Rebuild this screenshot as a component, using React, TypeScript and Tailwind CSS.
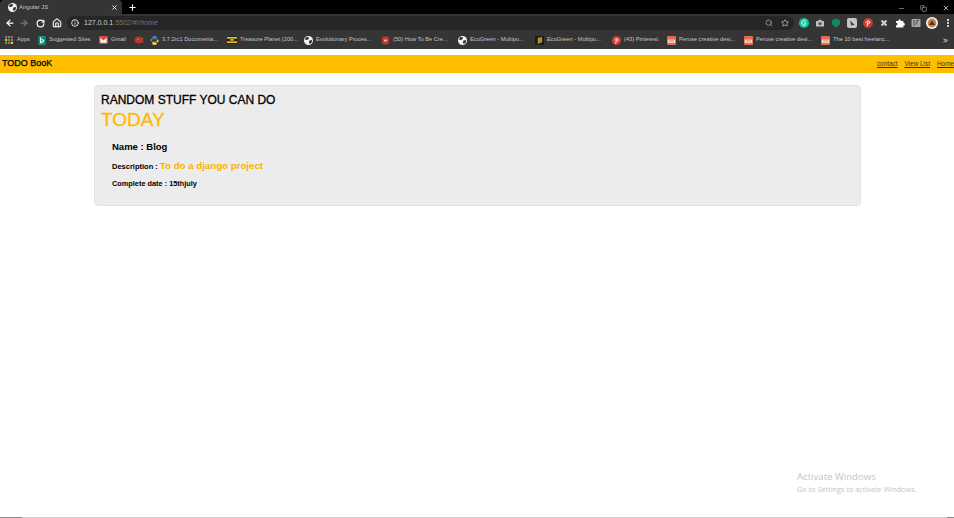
import { ArrowLeft, ArrowRight, RotateCw, Home, Info, Search, Star, MoreVertical, ChevronsRight, Plus, X, Minus, Copy } from "lucide-react";
import type { ReactNode } from "react";

function GlobeFav() {
  return (
    <svg width="9" height="9" viewBox="0 0 10 10">
      <circle cx="5" cy="5" r="5" fill="#f2f2f2" />
      <path d="M2 1.5 L5 1 L5.5 3 L3.5 4.5 L1 4 Z" fill="#333" />
      <path d="M6 5 L9 4.5 L8.5 7.5 L6.5 9 L5.5 7 Z" fill="#333" />
    </svg>
  );
}

function Peruse() {
  return (
    <svg width="9" height="9" viewBox="0 0 10 10">
      <rect width="10" height="10" rx="1" fill="#e8694a" />
      <rect x="1" y="4" width="8" height="3.5" fill="#f7e9e2" />
      <rect x="2" y="5" width="6" height="1" fill="#c96f5a" />
    </svg>
  );
}

const bookmarks: { label: string; w: string; icon: ReactNode }[] = [
  {
    label: "Suggested Sites",
    w: "w-[61px]",
    icon: (
      <svg width="8" height="9" viewBox="0 0 8 10">
        <rect width="8" height="10" fill="#0f8f7e" />
        <path d="M2.5 1.5 V7.5 L5.5 6 V4.5 L3.8 4" stroke="#fff" strokeWidth="1.2" fill="none" />
      </svg>
    ),
  },
  {
    label: "Gmail",
    w: "w-[35px]",
    icon: (
      <svg width="9" height="8" viewBox="0 0 10 9">
        <rect width="10" height="9" rx="1" fill="#e04a3c" />
        <path d="M1.5 2 L5 5 L8.5 2 V7.5 H1.5 Z" fill="#f5f5f5" />
      </svg>
    ),
  },
  {
    label: "",
    w: "w-[16px]",
    icon: (
      <svg width="10" height="8" viewBox="0 0 10 8">
        <ellipse cx="5" cy="4" rx="4" ry="3.6" fill="#b8382c" />
        <path d="M0 2 L2 3 M0 6 L2 5 M10 2 L8 3 M10 6 L8 5" stroke="#b8382c" />
        <circle cx="4" cy="3.5" r="0.6" fill="#f0b0a0" />
      </svg>
    ),
  },
  {
    label: "3.7.2rc1 Documenta...",
    w: "w-[77px]",
    icon: (
      <svg width="9" height="9" viewBox="0 0 10 10">
        <path d="M5 0 C2.5 0 2.5 1 2.5 2.5 H5.2 V3 H1.5 C0 3 0 5.5 1.5 6 H2.5 V4.5 C2.5 4 3 3.6 3.5 3.6 H6 C7 3.6 7.4 3 7.4 2.4 V1 C7.4 0.3 6 0 5 0 Z" fill="#4b8bbe" />
        <path d="M5 10 C7.5 10 7.5 9 7.5 7.5 H4.8 V7 H8.5 C10 7 10 4.5 8.5 4 H7.8 V5.5 C7.8 6 7 6.4 6.5 6.4 H4 C3 6.4 2.6 7 2.6 7.6 V9 C2.6 9.7 4 10 5 10 Z" fill="#ffd43b" />
      </svg>
    ),
  },
  {
    label: "Treasure Planet (200...",
    w: "w-[77px]",
    icon: (
      <svg width="10" height="8" viewBox="0 0 10 8">
        <rect width="10" height="8" fill="#222" />
        <rect y="1" width="10" height="1.6" fill="#f0c419" />
        <rect y="5.4" width="10" height="1.6" fill="#f0c419" />
        <rect x="3" y="3.2" width="4" height="1.4" fill="#f0c419" />
      </svg>
    ),
  },
  { label: "Evolutionary Proces...", w: "w-[77px]", icon: <GlobeFav /> },
  {
    label: "(50) How To Be Cre...",
    w: "w-[77px]",
    icon: (
      <svg width="9" height="9" viewBox="0 0 10 10">
        <path d="M1 2 L3 0.5 H7 L9 2 V8 L7 9.5 H3 L1 8 Z" fill="#c0392b" />
        <rect x="3.5" y="4" width="3" height="2" fill="#f3d0c8" />
      </svg>
    ),
  },
  { label: "EcoGreen - Multipu...", w: "w-[77px]", icon: <GlobeFav /> },
  {
    label: "EcoGreen - Multipu...",
    w: "w-[77px]",
    icon: (
      <svg width="9" height="9" viewBox="0 0 10 10">
        <rect width="10" height="10" fill="#1a1a1a" />
        <path d="M3 2 L8 1 V7 L3 9 Z" fill="#b98a2c" />
      </svg>
    ),
  },
  {
    label: "(43) Pinterest",
    w: "w-[55px]",
    icon: (
      <svg width="9" height="9" viewBox="0 0 10 10">
        <circle cx="5" cy="5" r="5" fill="#d23b33" />
        <path d="M4 8.5 L5 3.5 M3.2 5 C2.6 2.5 7.4 2 7 4.5 C6.8 6 5 6.2 4.6 5.4" stroke="#fff" strokeWidth="0.9" fill="none" />
      </svg>
    ),
  },
  { label: "Peruse creative desi...", w: "w-[77px]", icon: <Peruse /> },
  { label: "Peruse creative desi...", w: "w-[77px]", icon: <Peruse /> },
  { label: "The 10 best freelanc...", w: "w-[77px]", icon: <Peruse /> },
];

function Extensions() {
  return (
    <div className="flex items-center gap-[6px]">
      <svg width="10" height="10" viewBox="0 0 10 10">
        <circle cx="5" cy="5" r="5" fill="#15c39a" />
        <path d="M7 3.4 A2.4 2.4 0 1 0 7 6.6 M5.2 5.2 H7.2" stroke="#fff" strokeWidth="1" fill="none" />
      </svg>
      <svg width="10" height="10" viewBox="0 0 10 10">
        <path d="M1 3 H3 L3.8 1.8 H6.2 L7 3 H9 V8.4 H1 Z" fill="#bdbdbd" />
        <circle cx="5" cy="5.6" r="1.6" fill="#555" />
      </svg>
      <svg width="10" height="10" viewBox="0 0 10 10">
        <path d="M5 0.5 L9 2.5 V6 L5 9.8 L1 6 V2.5 Z" fill="#0f8a5f" />
      </svg>
      <svg width="10" height="10" viewBox="0 0 10 10">
        <rect width="10" height="10" rx="2" fill="#c4c4c4" />
        <path d="M3 2.5 L7.5 7 L5.5 7 L4.6 8 Z" fill="#333" />
      </svg>
      <svg width="10" height="10" viewBox="0 0 10 10">
        <circle cx="5" cy="5" r="5" fill="#c9382c" />
        <path d="M4 8.5 L5 3.5 M3.2 5 C2.6 2.5 7.4 2 7 4.5 C6.8 6 5 6.2 4.6 5.4" stroke="#fff" strokeWidth="0.9" fill="none" />
      </svg>
      <svg width="10" height="10" viewBox="0 0 10 10">
        <path d="M2.5 2.5 L7.5 7.5 M7.5 2.5 L2.5 7.5" stroke="#d0d0d0" strokeWidth="2" />
      </svg>
      <svg width="10" height="10" viewBox="0 0 10 10">
        <path d="M1 3 H3.4 C3.2 1 6 1 5.8 3 H8.4 V5 C10.4 5 10.4 7.6 8.4 7.6 V9.6 H1 V7.4 C3 7.4 3 4.8 1 4.8 Z" fill="#fff" />
      </svg>
      <svg width="10" height="10" viewBox="0 0 10 10">
        <rect x="0.5" y="1" width="9" height="8" rx="1" fill="#a8a8a8" />
        <path d="M6 2.5 V6.5 M6 2.5 H8 M2 3 H4.5 M2 5 H4.5 M2 7 H4.5" stroke="#353535" strokeWidth="0.8" />
      </svg>
      <svg width="12" height="12" viewBox="0 0 12 12" className="-mx-px">
        <circle cx="6" cy="6" r="6" fill="#f4f4f4" />
        <circle cx="6" cy="6" r="4.4" fill="#d97a3c" />
        <path d="M3 8 L6 3.5 L9 8 Z" fill="#3a3a3a" />
      </svg>
      <MoreVertical size={10} className="text-white" strokeWidth={3} />
    </div>
  );
}

function BrowserChrome() {
  return (
    <div className="bg-[#353535] text-[#c4c4c4]">
      <div className="flex h-[14px] items-end bg-black">
        <div className="flex h-[14px] w-[122px] items-center rounded-t-[4px] bg-[#353535] pl-[8px] pr-[4px]">
          <GlobeFav />
          <span className="ml-[2px] flex-1 text-[6px] text-[#c4c4c4]">Angular JS</span>
          <X size={7} className="text-white" strokeWidth={3} />
        </div>
        <Plus size={9} className="ml-[6px] mb-[2px] text-white" strokeWidth={3} />
        <div className="ml-auto mb-[2px] flex items-center gap-[15px] pr-[4px] text-[#bbbbbb]">
          <Minus size={7} />
          <Copy size={7} />
          <X size={8} className="text-white" />
        </div>
      </div>
      <div className="flex h-[18px] items-center pl-[5px]">
        <ArrowLeft size={10} className="text-white" strokeWidth={3} />
        <ArrowRight size={10} className="ml-[4px] text-[#777777]" strokeWidth={3} />
        <RotateCw size={9} className="ml-[7px] text-white" strokeWidth={3} />
        <Home size={10} className="ml-[7px] text-white" strokeWidth={2.5} />
        <div className="ml-[5px] flex h-[14px] w-[727px] items-center rounded-full bg-[#262626] bg-[radial-gradient(#4a4a4a_0.6px,transparent_0.7px)] bg-[length:2px_2px] pl-[4px] pr-[5px]">
          <Info size={8} className="text-white" strokeWidth={2.5} />
          <span className="ml-[5px] bg-[#262626] text-[7px]">
            <span className="text-[#d5d5d5]">127.0.0.1</span>
            <span className="italic text-[#777777]">:5502/#!/home</span>
          </span>
          <Search size={8} className="ml-auto text-[#bbbbbb]" />
          <Star size={8} className="ml-[8px] text-[#dddddd]" />
        </div>
        <div className="ml-[5px]">
          <Extensions />
        </div>
      </div>
      <div className="flex h-[17px] items-center pb-[1px] pl-[5px] pr-[5px] text-[5.7px] leading-none">
        <div className="flex w-[33px] items-center">
          <svg width="8" height="8" viewBox="0 0 8 8">
            <rect width="2.2" height="2.2" fill="#e0533d" />
            <rect x="2.9" width="2.2" height="2.2" fill="#4b8bbe" />
            <rect x="5.8" width="2.2" height="2.2" fill="#e0533d" />
            <rect y="2.9" width="2.2" height="2.2" fill="#f0c419" />
            <rect x="2.9" y="2.9" width="2.2" height="2.2" fill="#3aa757" />
            <rect x="5.8" y="2.9" width="2.2" height="2.2" fill="#4b8bbe" />
            <rect y="5.8" width="2.2" height="2.2" fill="#3aa757" />
            <rect x="2.9" y="5.8" width="2.2" height="2.2" fill="#e0533d" />
            <rect x="5.8" y="5.8" width="2.2" height="2.2" fill="#f0c419" />
          </svg>
          <span className="ml-[4px]">Apps</span>
        </div>
        {bookmarks.map((b, i) => (
          <div key={i} className={`flex shrink-0 items-center gap-[3px] whitespace-nowrap ${b.w}`}>
            {b.icon}
            {b.label && <span>{b.label}</span>}
          </div>
        ))}
        <ChevronsRight size={7} className="ml-auto text-white" strokeWidth={3} />
      </div>
    </div>
  );
}

export default function App() {
  return (
    <div className="flex h-[518px] w-[954px] flex-col overflow-hidden bg-white font-['Liberation_Sans',Arial,sans-serif]">
      <BrowserChrome />
      <div className="mt-[6px] flex h-[18px] items-center justify-between bg-[#ffbf00] pl-[2px]">
        <span className="text-[9px] text-black [-webkit-text-stroke:0.25px_black]">TODO BooK</span>
        <nav className="flex gap-[7px] text-[6.4px] text-[#333333] underline">
          <a>contact</a>
          <a>View List</a>
          <a className="w-[17px] whitespace-nowrap">Home</a>
        </nav>
      </div>
      <div className="ml-[94px] mr-[93px] mt-[12px] flex h-[121px] flex-col rounded-[4px] border border-[#e3e3e3] bg-[#ececec] pl-[6px] pt-[7px]">
        <h2 className="text-[12px] leading-[15px] text-black [-webkit-text-stroke:0.3px_black]">RANDOM STUFF YOU CAN DO</h2>
        <h1 className="text-[19px] leading-[23px] text-[#ffbb00] [-webkit-text-stroke:0.3px_#ffbb00]">TODAY</h1>
        <div className="mt-[10px] pl-[11px] font-bold text-black">
          <p className="text-[9.5px] leading-[12px]">Name : Blog</p>
          <p className="mt-[6px] flex items-baseline gap-[2px] text-[7.5px] leading-[14px]">
            Description :<span className="text-[9.7px] text-[#f5b400]">To do a django project</span>
          </p>
          <p className="mt-[5px] text-[7.35px] leading-[9px]">Complete date : 15thjuly</p>
        </div>
      </div>
      <div className="relative flex-1">
        <div className="absolute left-[797px] top-[265px] text-[#c4c4c4]">
          <p className="font-['Open_Sans',sans-serif] text-[9.6px] leading-[12px]">Activate Windows</p>
          <p className="font-['Open_Sans',sans-serif] text-[7.3px] leading-[12px]">Go to Settings to activate Windows.</p>
        </div>
      </div>
      <div className="flex h-px bg-[#d0d0d0]">
        <div className="w-[22px] bg-[#8a8a8a]" />
        <div className="ml-auto w-[7px] bg-[#8a8a8a]" />
      </div>
    </div>
  );
}
